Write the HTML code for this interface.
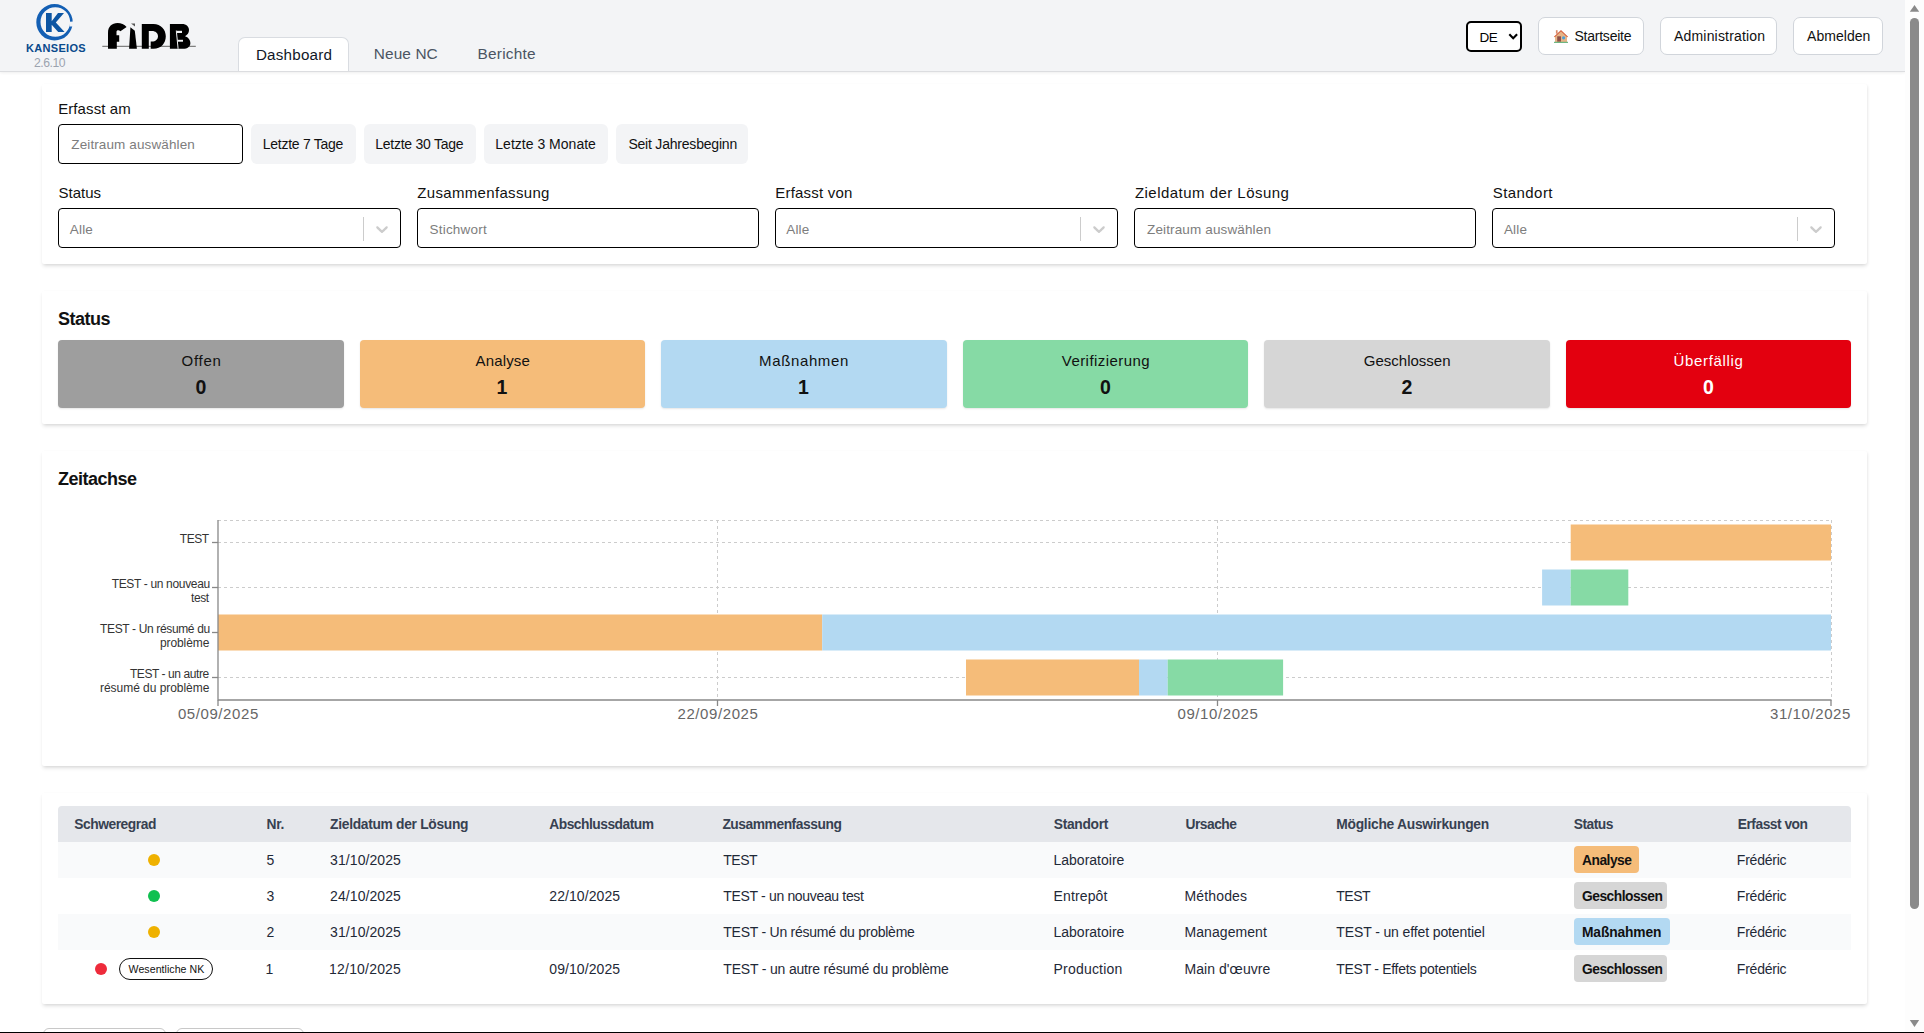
<!DOCTYPE html>
<html><head><meta charset="utf-8">
<style>
*{box-sizing:border-box;margin:0;padding:0}
html,body{width:1924px;height:1033px;overflow:hidden;background:#fff}
body{font-family:"Liberation Sans",sans-serif;color:#111827;position:relative}
.abs{position:absolute}
.t{position:absolute;white-space:nowrap;line-height:1}
#hdr{position:absolute;left:0;top:0;width:1905px;height:72px;background:#f3f4f6;border-bottom:1px solid #dcdde0;box-shadow:0 1px 3px rgba(0,0,0,.07)}
.hbtn{position:absolute;top:17px;height:37.5px;background:#fff;border:1px solid #d1d5db;border-radius:7px}
.card{position:absolute;left:42px;width:1825px;background:#fff;border-radius:2px;box-shadow:0 2.5px 4px -1px rgba(0,0,0,.12),1px 1px 3px rgba(0,0,0,.05)}
.inp{position:absolute;height:40px;border:1px solid #000;border-radius:4px;background:#fff}
.qbtn{position:absolute;top:124px;height:40px;background:#f3f4f6;border-radius:6px}
.sbox{position:absolute;top:340px;height:68px;border-radius:4px;box-shadow:0 1px 2px rgba(0,0,0,.10)}
.badge{position:absolute;border-radius:4px}
.dot{position:absolute;width:12px;height:12px;border-radius:50%}
.sep{position:absolute;top:217px;width:1px;height:24px;background:#ccc}
svg{position:absolute;overflow:visible}
</style></head>
<body>
<!-- HEADER -->
<div id="hdr"></div>
<svg style="left:0;top:0" width="200" height="72" viewBox="0 0 200 72">
  <path fill-rule="evenodd" fill="#135fb4" d="M36.3,22.3 A18.2,18.2 0 1 0 72.7,22.3 A18.2,18.2 0 1 0 36.3,22.3 Z M40.5,22.0 A14.8,14.8 0 1 0 70.1,22.0 A14.8,14.8 0 1 0 40.5,22.0 Z"/>
  <polygon points="69.5,21.7 74,21.4 74,26.6 69.5,26.4" fill="#f3f4f6"/>
  <path d="M46,12.9 H51.7 V21.3 L58,12.9 H64 L55.8,22.4 L64.6,32 H58.2 L51.7,24.8 V32 H46 Z" fill="#0c55a3"/>
  <line x1="102.3" y1="46.4" x2="195.8" y2="46.4" stroke="#808080" stroke-width="1.2"/>
  <path d="M108,48.8 V33 C108,26.5 112,23.1 117.5,23.1 C121,23.1 124.5,24.5 126.6,27 L120.4,31.2 C119.2,29.9 117,29.7 116.5,31.5 V35.2 H119.2 V41.7 H116.8 V48.8 Z" fill="#000"/>
  <path d="M129.1,48.8 L130.4,27.2 L134.8,30.7 L136.9,48.8 Z" fill="#000"/>
  <path d="M131,23.4 L135,23.4 L135,26.4 Z" fill="#555"/>
  <path d="M141.8,23.9 H153.5 C161,23.9 165.8,29.5 165.8,36.3 C165.8,43.5 161,48.8 153.5,48.8 H150.7 V41.5 H152 C155.5,41.5 158,39.3 158,36.2 C158,33 155.5,30.9 152,30.9 H148.8 V48.8 H141.8 Z" fill="#000"/>
  <path d="M169.9,23.9 H182 C186.5,23.9 189,26.5 189,30 C189,32.8 187.5,35 185,36.2 C188.5,37.3 190.4,40 190.4,43 C190.4,46.5 187.5,48.8 183,48.8 H169.9 Z" fill="#000"/>
  <path d="M175.8,30.6 L176.8,30.6 L178.6,48.8 L177.6,48.8 Z" fill="#f3f4f6"/>
  <rect x="177" y="30.8" width="5" height="2.2" fill="#f3f4f6"/>
  <rect x="177.6" y="39.8" width="5.4" height="1.9" fill="#f3f4f6"/>
</svg>
<div class="abs" style="left:238px;top:37px;width:111px;height:34px;background:#fff;border:1px solid #d9dce1;border-bottom:none;border-radius:7px 7px 0 0"></div>

<div class="abs" style="left:1466px;top:21px;width:56px;height:31px;border:2.2px solid #000;border-radius:5px;background:#fff"></div>
<svg style="left:0;top:0" width="1" height="1"><polyline points="1509.3,34.2 1513.2,38.2 1517.1,34.2" fill="none" stroke="#000" stroke-width="2.1"/></svg>

<div class="hbtn" style="left:1538px;width:106px"></div>
<svg style="left:0;top:0" width="1" height="1">
  <rect x="1555.9" y="30.2" width="1.7" height="3.5" fill="#d98a6a"/>
  <polygon points="1555,36.3 1561,31 1567,36.3 1567,42 1555,42" fill="#e6b487"/>
  <polygon points="1553.9,36.8 1561,29.9 1568.1,36.8 1567.2,37.3 1561,31.5 1554.8,37.3" fill="#d4603e"/>
  <rect x="1557.2" y="36.3" width="3.8" height="5.4" fill="#8e5148"/>
  <circle cx="1563.6" cy="37.8" r="1.6" fill="#4aa0d8"/>
  <rect x="1554" y="41.8" width="14" height="1.1" fill="#5fae76"/>
</svg>
<div class="hbtn" style="left:1660px;width:117px"></div>
<div class="hbtn" style="left:1793px;width:90px"></div>

<!-- CARD 1 FILTERS -->
<div class="card" style="top:84px;height:180px"></div>
<div class="inp" style="left:58px;top:124px;width:185px"></div>
<div class="qbtn" style="left:251px;width:105px"></div>
<div class="qbtn" style="left:364px;width:112px"></div>
<div class="qbtn" style="left:484px;width:124px"></div>
<div class="qbtn" style="left:616px;width:132px"></div>

<div class="inp" style="left:58px;top:208px;width:343px"></div>
<div class="inp" style="left:417px;top:208px;width:342px"></div>
<div class="inp" style="left:775px;top:208px;width:343px"></div>
<div class="inp" style="left:1134px;top:208px;width:342px"></div>
<div class="inp" style="left:1492px;top:208px;width:343px"></div>
<div class="sep" style="left:363px"></div>
<div class="sep" style="left:1080px"></div>
<div class="sep" style="left:1797px"></div>
<svg style="left:372px;top:219px" width="20" height="20" viewBox="0 0 20 20"><path fill="#ccc" d="M4.516 7.548c0.436-0.446 1.043-0.481 1.576 0l3.908 3.747 3.908-3.747c0.533-0.481 1.141-0.446 1.574 0 0.436 0.445 0.408 1.197 0 1.615-0.406 0.418-4.695 4.502-4.695 4.502-0.217 0.223-0.502 0.335-0.787 0.335s-0.57-0.112-0.789-0.335c0 0-4.287-4.084-4.695-4.502s-0.436-1.170 0-1.615z"/></svg>
<svg style="left:1089px;top:219px" width="20" height="20" viewBox="0 0 20 20"><path fill="#ccc" d="M4.516 7.548c0.436-0.446 1.043-0.481 1.576 0l3.908 3.747 3.908-3.747c0.533-0.481 1.141-0.446 1.574 0 0.436 0.445 0.408 1.197 0 1.615-0.406 0.418-4.695 4.502-4.695 4.502-0.217 0.223-0.502 0.335-0.787 0.335s-0.57-0.112-0.789-0.335c0 0-4.287-4.084-4.695-4.502s-0.436-1.170 0-1.615z"/></svg>
<svg style="left:1806px;top:219px" width="20" height="20" viewBox="0 0 20 20"><path fill="#ccc" d="M4.516 7.548c0.436-0.446 1.043-0.481 1.576 0l3.908 3.747 3.908-3.747c0.533-0.481 1.141-0.446 1.574 0 0.436 0.445 0.408 1.197 0 1.615-0.406 0.418-4.695 4.502-4.695 4.502-0.217 0.223-0.502 0.335-0.787 0.335s-0.57-0.112-0.789-0.335c0 0-4.287-4.084-4.695-4.502s-0.436-1.170 0-1.615z"/></svg>

<!-- CARD 2 STATUS -->
<div class="card" style="top:291px;height:133px"></div>
<div class="sbox" style="left:58px;width:286px;background:#9e9e9e"></div>
<div class="sbox" style="left:360px;width:285px;background:#f5bc79"></div>
<div class="sbox" style="left:661px;width:286px;background:#b3d9f2"></div>
<div class="sbox" style="left:963px;width:285px;background:#86daa5"></div>
<div class="sbox" style="left:1264px;width:286px;background:#d6d6d6"></div>
<div class="sbox" style="left:1566px;width:285px;background:#e3000f"></div>

<!-- CARD 3 CHART -->
<div class="card" style="top:451px;height:315px"></div>
<svg style="left:0;top:0" width="1" height="1">
  <g stroke="#ccc" stroke-width="1" stroke-dasharray="3 3" fill="none">
    <line x1="218" y1="520.5" x2="1831" y2="520.5"/>
    <line x1="218" y1="542.5" x2="1831" y2="542.5"/>
    <line x1="218" y1="587.5" x2="1831" y2="587.5"/>
    <line x1="218" y1="632.5" x2="1831" y2="632.5"/>
    <line x1="218" y1="677.5" x2="1831" y2="677.5"/>
    <line x1="717.5" y1="520" x2="717.5" y2="700"/>
    <line x1="1217.5" y1="520" x2="1217.5" y2="700"/>
    <line x1="1831.5" y1="520" x2="1831.5" y2="700"/>
  </g>
  <g>
    <rect x="1570.7" y="524.5" width="260.3" height="36" fill="#f5bc79"/>
    <rect x="1542.1" y="569.5" width="28.6" height="36" fill="#b3d9f2"/>
    <rect x="1570.7" y="569.5" width="57.6" height="36" fill="#86daa5"/>
    <rect x="218" y="614.5" width="604.2" height="36" fill="#f5bc79"/>
    <rect x="822.2" y="614.5" width="1008.8" height="36" fill="#b3d9f2"/>
    <rect x="966" y="659.5" width="173" height="36" fill="#f5bc79"/>
    <rect x="1139" y="659.5" width="28.7" height="36" fill="#b3d9f2"/>
    <rect x="1167.7" y="659.5" width="115.4" height="36" fill="#86daa5"/>
  </g>
  <g stroke="#888" stroke-width="1.3" fill="none">
    <line x1="218" y1="520" x2="218" y2="700.5"/>
    <line x1="218" y1="700" x2="1831.5" y2="700"/>
    <line x1="212" y1="542.5" x2="218" y2="542.5"/>
    <line x1="212" y1="587.5" x2="218" y2="587.5"/>
    <line x1="212" y1="632.5" x2="218" y2="632.5"/>
    <line x1="212" y1="677.5" x2="218" y2="677.5"/>
    <line x1="218" y1="700" x2="218" y2="706"/>
    <line x1="717.5" y1="700" x2="717.5" y2="706"/>
    <line x1="1217.5" y1="700" x2="1217.5" y2="706"/>
    <line x1="1831" y1="700" x2="1831" y2="706"/>
  </g>
</svg>

<!-- CARD 4 TABLE -->
<div class="card" style="top:793px;height:211px"></div>
<div class="abs" style="left:58px;top:806px;width:1793px;height:36px;background:#e5e7eb;border-radius:4px 4px 0 0"></div>
<div class="abs" style="left:58px;top:842px;width:1793px;height:36px;background:#f9fafb"></div>
<div class="abs" style="left:58px;top:914px;width:1793px;height:36px;background:#f9fafb"></div>
<div class="dot" style="left:148px;top:854px;background:#efb100"></div>
<div class="dot" style="left:148px;top:890px;background:#10c050"></div>
<div class="dot" style="left:148px;top:926px;background:#efb100"></div>
<div class="dot" style="left:95px;top:963px;background:#ee2b3b"></div>
<div class="abs" style="left:119px;top:958px;width:94px;height:22px;border:1px solid #111;border-radius:11px"></div>
<div class="badge" style="left:1574px;top:846px;width:65px;height:26.5px;background:#f5bc79"></div>
<div class="badge" style="left:1574px;top:882px;width:93px;height:26.5px;background:#d6d6d6"></div>
<div class="badge" style="left:1574px;top:918px;width:96px;height:26.5px;background:#b3d9f2"></div>
<div class="badge" style="left:1574px;top:955px;width:93px;height:26.5px;background:#d6d6d6"></div>

<!-- bottom partial buttons -->
<div class="abs" style="left:43px;top:1028px;width:123px;height:30px;border:1px solid #c8c8c8;border-radius:6px;background:#fff"></div>
<div class="abs" style="left:176px;top:1028px;width:128px;height:30px;border:1px solid #c8c8c8;border-radius:6px;background:#fff"></div>

<div class="t" style="left:255.90px;top:46.83px;font-size:15.2px;color:#111827;letter-spacing:0.218px">Dashboard</div>
<div class="t" style="left:373.80px;top:45.81px;font-size:15.4px;color:#4b5563;letter-spacing:0.103px">Neue NC</div>
<div class="t" style="left:477.60px;top:45.81px;font-size:15.4px;color:#4b5563;letter-spacing:0.214px">Berichte</div>
<div class="t" style="left:1479.50px;top:30.82px;font-size:13.5px;color:#000;letter-spacing:-0.500px">DE</div>
<div class="t" style="left:1574.50px;top:29.10px;font-size:14px;color:#111;letter-spacing:-0.239px">Startseite</div>
<div class="t" style="left:1674.00px;top:29.30px;font-size:14px;color:#111;letter-spacing:0.183px">Administration</div>
<div class="t" style="left:1807.00px;top:29.30px;font-size:14px;color:#111;letter-spacing:0.049px">Abmelden</div>
<div class="t" style="left:26.00px;top:42.65px;font-size:11px;color:#0a4a8c;font-weight:bold;letter-spacing:0.312px">KANSEIOS</div>
<div class="t" style="left:34.10px;top:56.63px;font-size:12.2px;color:#9ca3af;letter-spacing:-0.500px">2.6.10</div>
<div class="t" style="left:58.20px;top:100.95px;font-size:15px;color:#111;letter-spacing:0.090px">Erfasst am</div>
<div class="t" style="left:71.30px;top:138.22px;font-size:13.5px;color:#7d7d7d;letter-spacing:0.115px">Zeitraum auswählen</div>
<div class="t" style="left:262.80px;top:137.10px;font-size:14px;color:#111;letter-spacing:-0.273px">Letzte 7 Tage</div>
<div class="t" style="left:375.20px;top:137.10px;font-size:14px;color:#111;letter-spacing:-0.251px">Letzte 30 Tage</div>
<div class="t" style="left:495.30px;top:137.10px;font-size:14px;color:#111;letter-spacing:0.013px">Letzte 3 Monate</div>
<div class="t" style="left:628.40px;top:137.10px;font-size:14px;color:#111;letter-spacing:-0.206px">Seit Jahresbeginn</div>
<div class="t" style="left:58.60px;top:184.85px;font-size:15px;color:#111">Status</div>
<div class="t" style="left:417.30px;top:184.85px;font-size:15px;color:#111;letter-spacing:0.327px">Zusammenfassung</div>
<div class="t" style="left:775.30px;top:184.85px;font-size:15px;color:#111;letter-spacing:0.201px">Erfasst von</div>
<div class="t" style="left:1134.90px;top:184.85px;font-size:15px;color:#111;letter-spacing:0.471px">Zieldatum der Lösung</div>
<div class="t" style="left:1492.80px;top:184.85px;font-size:15px;color:#111;letter-spacing:0.423px">Standort</div>
<div class="t" style="left:69.75px;top:223.03px;font-size:13.5px;color:#7d7d7d;letter-spacing:0.199px">Alle</div>
<div class="t" style="left:429.60px;top:223.03px;font-size:13.5px;color:#7d7d7d;letter-spacing:0.192px">Stichwort</div>
<div class="t" style="left:786.20px;top:223.03px;font-size:13.5px;color:#7d7d7d;letter-spacing:0.199px">Alle</div>
<div class="t" style="left:1147.00px;top:223.03px;font-size:13.5px;color:#7d7d7d;letter-spacing:0.138px">Zeitraum auswählen</div>
<div class="t" style="left:1503.90px;top:223.03px;font-size:13.5px;color:#7d7d7d;letter-spacing:0.199px">Alle</div>
<div class="t" style="left:58.00px;top:309.60px;font-size:18px;color:#111;font-weight:bold;letter-spacing:-0.500px">Status</div>
<div class="t" style="left:181.50px;top:353.05px;font-size:15px;color:#111;letter-spacing:0.732px">Offen</div>
<div class="t" style="left:195.50px;top:377.82px;font-size:19.5px;color:#111;font-weight:bold">0</div>
<div class="t" style="left:475.60px;top:353.05px;font-size:15px;color:#111;letter-spacing:0.130px">Analyse</div>
<div class="t" style="left:496.50px;top:377.82px;font-size:19.5px;color:#111;font-weight:bold">1</div>
<div class="t" style="left:759.05px;top:353.05px;font-size:15px;color:#111;letter-spacing:0.629px">Maßnahmen</div>
<div class="t" style="left:798.00px;top:377.82px;font-size:19.5px;color:#111;font-weight:bold">1</div>
<div class="t" style="left:1061.80px;top:353.05px;font-size:15px;color:#111;letter-spacing:0.433px">Verifizierung</div>
<div class="t" style="left:1100.00px;top:377.82px;font-size:19.5px;color:#111;font-weight:bold">0</div>
<div class="t" style="left:1363.80px;top:353.05px;font-size:15px;color:#111">Geschlossen</div>
<div class="t" style="left:1401.50px;top:377.82px;font-size:19.5px;color:#111;font-weight:bold">2</div>
<div class="t" style="left:1673.40px;top:353.05px;font-size:15px;color:#fff;letter-spacing:0.687px">Überfällig</div>
<div class="t" style="left:1703.00px;top:377.82px;font-size:19.5px;color:#fff;font-weight:bold">0</div>
<div class="t" style="left:58.00px;top:469.70px;font-size:18px;color:#111;font-weight:bold;letter-spacing:-0.500px">Zeitachse</div>
<div class="t" style="left:179.86px;top:532.80px;font-size:12px;color:#333;letter-spacing:-0.500px">TEST</div>
<div class="t" style="left:111.70px;top:577.70px;font-size:12px;color:#333;letter-spacing:-0.336px">TEST - un nouveau</div>
<div class="t" style="left:191.00px;top:591.50px;font-size:12px;color:#333;letter-spacing:-0.436px">test</div>
<div class="t" style="left:100.00px;top:622.60px;font-size:12px;color:#333;letter-spacing:-0.352px">TEST - Un résumé du</div>
<div class="t" style="left:159.90px;top:636.60px;font-size:12px;color:#333;letter-spacing:-0.079px">problème</div>
<div class="t" style="left:129.90px;top:667.80px;font-size:12px;color:#333;letter-spacing:-0.421px">TEST - un autre</div>
<div class="t" style="left:100.00px;top:681.50px;font-size:12px;color:#333;letter-spacing:-0.040px">résumé du problème</div>
<div class="t" style="left:177.90px;top:706.15px;font-size:15px;color:#666;letter-spacing:0.585px">05/09/2025</div>
<div class="t" style="left:677.50px;top:706.15px;font-size:15px;color:#666;letter-spacing:0.585px">22/09/2025</div>
<div class="t" style="left:1177.50px;top:706.15px;font-size:15px;color:#666;letter-spacing:0.585px">09/10/2025</div>
<div class="t" style="left:1770.00px;top:706.15px;font-size:15px;color:#666;letter-spacing:0.585px">31/10/2025</div>
<div class="t" style="left:74.20px;top:818.07px;font-size:13.8px;color:#374151;font-weight:bold;letter-spacing:-0.442px">Schweregrad</div>
<div class="t" style="left:266.50px;top:818.07px;font-size:13.8px;color:#374151;font-weight:bold;letter-spacing:-0.286px">Nr.</div>
<div class="t" style="left:330.10px;top:818.07px;font-size:13.8px;color:#374151;font-weight:bold;letter-spacing:-0.299px">Zieldatum der Lösung</div>
<div class="t" style="left:549.30px;top:818.07px;font-size:13.8px;color:#374151;font-weight:bold;letter-spacing:-0.500px">Abschlussdatum</div>
<div class="t" style="left:722.40px;top:818.07px;font-size:13.8px;color:#374151;font-weight:bold;letter-spacing:-0.451px">Zusammenfassung</div>
<div class="t" style="left:1053.80px;top:818.07px;font-size:13.8px;color:#374151;font-weight:bold;letter-spacing:-0.303px">Standort</div>
<div class="t" style="left:1185.50px;top:818.07px;font-size:13.8px;color:#374151;font-weight:bold;letter-spacing:-0.500px">Ursache</div>
<div class="t" style="left:1336.30px;top:818.07px;font-size:13.8px;color:#374151;font-weight:bold;letter-spacing:-0.263px">Mögliche Auswirkungen</div>
<div class="t" style="left:1573.80px;top:818.07px;font-size:13.8px;color:#374151;font-weight:bold;letter-spacing:-0.500px">Status</div>
<div class="t" style="left:1737.80px;top:818.07px;font-size:13.8px;color:#374151;font-weight:bold;letter-spacing:-0.500px">Erfasst von</div>
<div class="t" style="left:266.50px;top:853.10px;font-size:14px;color:#1f2937">5</div>
<div class="t" style="left:330.10px;top:853.10px;font-size:14px;color:#1f2937;letter-spacing:0.080px">31/10/2025</div>
<div class="t" style="left:723.30px;top:853.10px;font-size:14px;color:#1f2937;letter-spacing:-0.500px">TEST</div>
<div class="t" style="left:1053.50px;top:853.10px;font-size:14px;color:#1f2937">Laboratoire</div>
<div class="t" style="left:1736.80px;top:853.10px;font-size:14px;color:#1f2937;letter-spacing:-0.221px">Frédéric</div>
<div class="t" style="left:266.50px;top:889.10px;font-size:14px;color:#1f2937">3</div>
<div class="t" style="left:330.10px;top:889.10px;font-size:14px;color:#1f2937;letter-spacing:0.080px">24/10/2025</div>
<div class="t" style="left:549.30px;top:889.10px;font-size:14px;color:#1f2937;letter-spacing:0.080px">22/10/2025</div>
<div class="t" style="left:723.30px;top:889.10px;font-size:14px;color:#1f2937;letter-spacing:-0.332px">TEST - un nouveau test</div>
<div class="t" style="left:1053.50px;top:889.10px;font-size:14px;color:#1f2937;letter-spacing:0.138px">Entrepôt</div>
<div class="t" style="left:1184.50px;top:889.10px;font-size:14px;color:#1f2937;letter-spacing:0.145px">Méthodes</div>
<div class="t" style="left:1336.30px;top:889.10px;font-size:14px;color:#1f2937;letter-spacing:-0.500px">TEST</div>
<div class="t" style="left:1736.80px;top:889.10px;font-size:14px;color:#1f2937;letter-spacing:-0.221px">Frédéric</div>
<div class="t" style="left:266.50px;top:924.80px;font-size:14px;color:#1f2937">2</div>
<div class="t" style="left:330.10px;top:924.80px;font-size:14px;color:#1f2937;letter-spacing:0.080px">31/10/2025</div>
<div class="t" style="left:723.30px;top:924.80px;font-size:14px;color:#1f2937;letter-spacing:-0.245px">TEST - Un résumé du problème</div>
<div class="t" style="left:1053.50px;top:924.80px;font-size:14px;color:#1f2937">Laboratoire</div>
<div class="t" style="left:1184.50px;top:924.80px;font-size:14px;color:#1f2937;letter-spacing:0.064px">Management</div>
<div class="t" style="left:1336.30px;top:924.80px;font-size:14px;color:#1f2937;letter-spacing:-0.116px">TEST - un effet potentiel</div>
<div class="t" style="left:1736.80px;top:924.80px;font-size:14px;color:#1f2937;letter-spacing:-0.221px">Frédéric</div>
<div class="t" style="left:265.50px;top:961.80px;font-size:14px;color:#1f2937">1</div>
<div class="t" style="left:329.10px;top:961.80px;font-size:14px;color:#1f2937;letter-spacing:0.191px">12/10/2025</div>
<div class="t" style="left:549.30px;top:961.80px;font-size:14px;color:#1f2937;letter-spacing:0.080px">09/10/2025</div>
<div class="t" style="left:723.30px;top:961.80px;font-size:14px;color:#1f2937;letter-spacing:-0.185px">TEST - un autre résumé du problème</div>
<div class="t" style="left:1053.50px;top:961.80px;font-size:14px;color:#1f2937;letter-spacing:0.206px">Production</div>
<div class="t" style="left:1184.50px;top:961.80px;font-size:14px;color:#1f2937;letter-spacing:0.059px">Main d&#x27;œuvre</div>
<div class="t" style="left:1336.30px;top:961.80px;font-size:14px;color:#1f2937;letter-spacing:-0.295px">TEST - Effets potentiels</div>
<div class="t" style="left:1736.80px;top:961.80px;font-size:14px;color:#1f2937;letter-spacing:-0.221px">Frédéric</div>
<div class="t" style="left:1582.00px;top:854.07px;font-size:13.8px;color:#111;font-weight:bold;letter-spacing:-0.500px">Analyse</div>
<div class="t" style="left:1582.00px;top:889.67px;font-size:13.8px;color:#111;font-weight:bold;letter-spacing:-0.500px">Geschlossen</div>
<div class="t" style="left:1582.00px;top:925.77px;font-size:13.8px;color:#111;font-weight:bold;letter-spacing:-0.133px">Maßnahmen</div>
<div class="t" style="left:1582.00px;top:962.77px;font-size:13.8px;color:#111;font-weight:bold;letter-spacing:-0.500px">Geschlossen</div>
<div class="t" style="left:128.60px;top:963.99px;font-size:10.6px;color:#111;letter-spacing:0.038px">Wesentliche NK</div>

<!-- SCROLLBAR -->
<div class="abs" style="left:1905px;top:0;width:19px;height:1033px;background:#fdfdfd"></div>
<svg style="left:0;top:0" width="1" height="1">
  <polygon points="1914.5,5 1919.2,11.8 1909.8,11.8" fill="#8a8a8a"/>
  <polygon points="1909.8,1020 1919.2,1020 1914.5,1027" fill="#8a8a8a"/>
</svg>
<div class="abs" style="left:1910px;top:18px;width:9.2px;height:891px;border-radius:4.6px;background:#8a8a8a"></div>
<div class="abs" style="left:0;top:1032px;width:1924px;height:1px;background:#000"></div>
</body></html>
